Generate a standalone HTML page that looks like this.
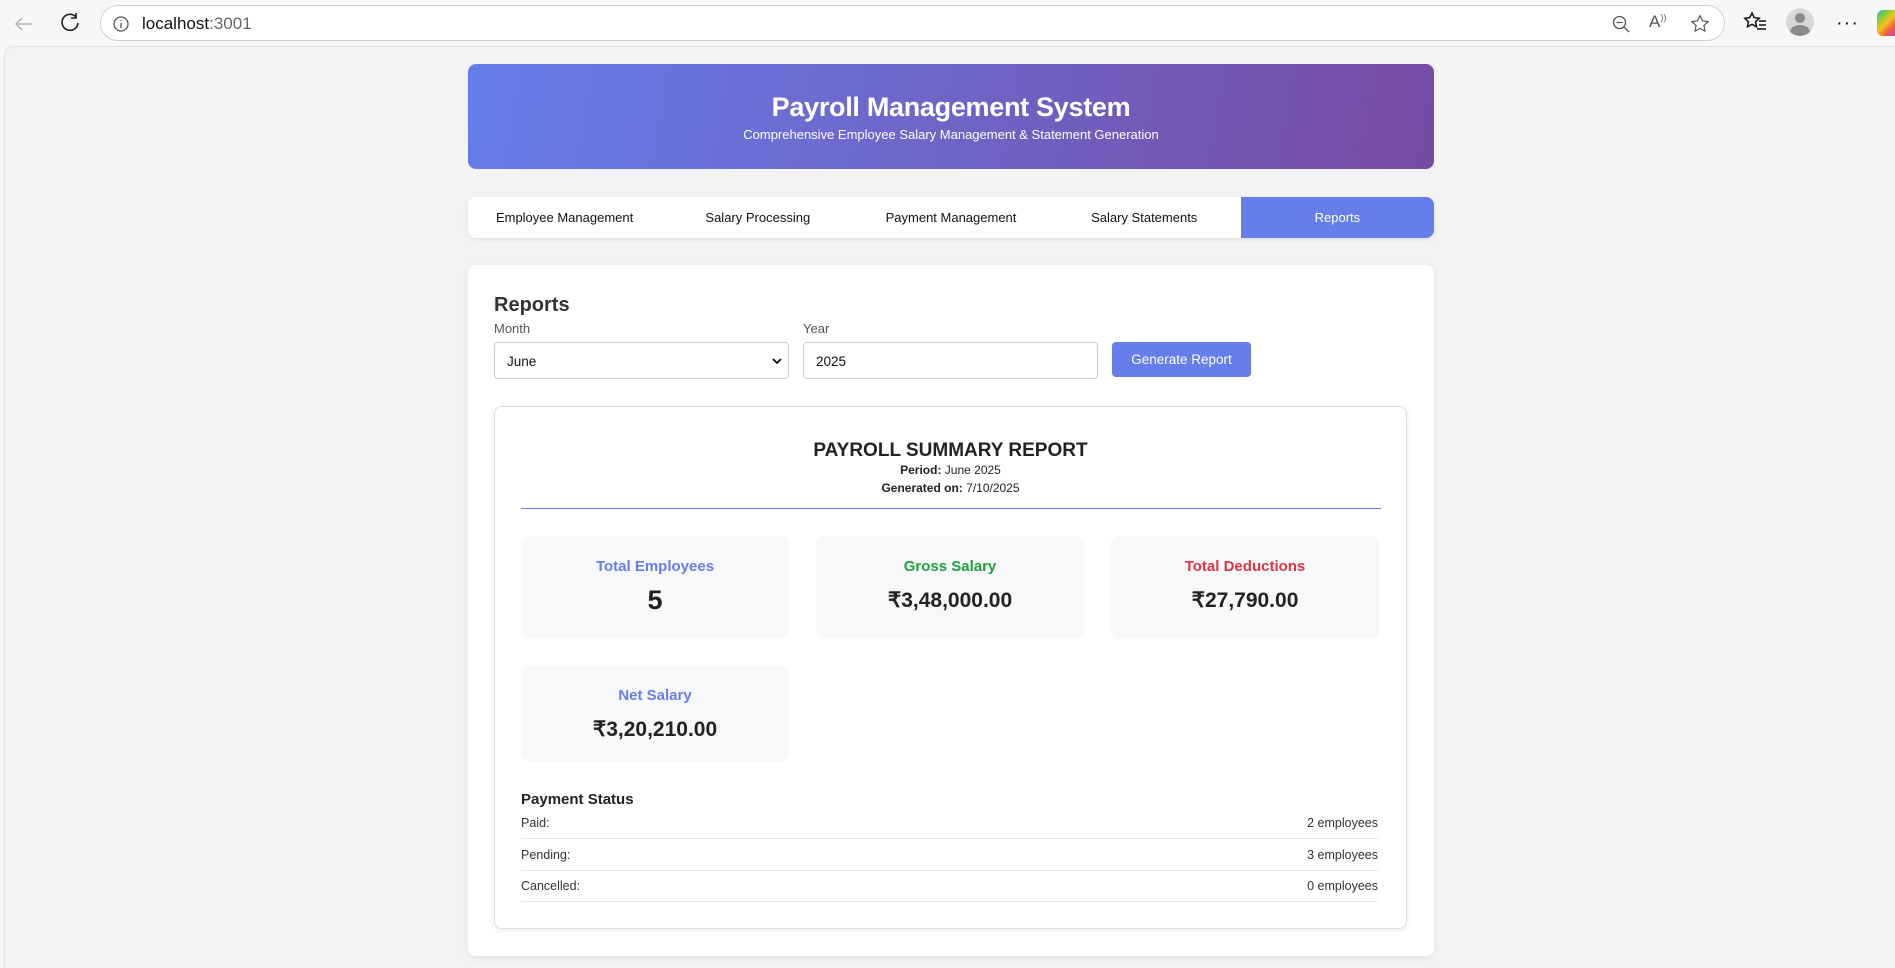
<!DOCTYPE html>
<html><head><meta charset="utf-8"><style>
*{box-sizing:border-box;margin:0;padding:0}
html{width:1895px;height:968px;overflow:hidden}
body{width:1895px;height:968px;overflow:hidden;background:#f7f7f7;font-family:"Liberation Sans",sans-serif;position:relative}
.top{position:absolute;left:0;top:0;width:1895px;height:47px;background:#f7f7f7}
.addr{position:absolute;left:100px;top:5px;width:1625px;height:36px;border:1px solid #d0d0d0;border-radius:18px;background:#fff}
.addr .txt{position:absolute;left:41px;top:8px;font-size:17px;color:#111}
.addr .txt span{color:#666}
.page{position:absolute;left:4px;top:46px;width:1891px;height:922px;background:#f3f3f3;border:1px solid #e2e2e2;border-bottom:none;border-right:none;border-radius:9px 0 0 0}
.c{position:absolute;left:468px;width:966px}
.hdr{top:64px;height:105px;border-radius:8px;background:linear-gradient(100deg,#667eea,#764ba2);color:#fff;text-align:center}
.hdr h1{font-size:27px;margin-top:28px;letter-spacing:-0.3px}
.hdr p{font-size:13px;margin-top:4px}
.nav{top:197px;height:41px;background:#fff;border-radius:8px;box-shadow:0 2px 6px rgba(0,0,0,.08);display:flex;overflow:hidden}
.nav div{flex:1;text-align:center;line-height:41px;font-size:13px;color:#111}
.nav .a{background:#667eea;color:#fff}
.card{top:265px;height:691px;background:#fff;border-radius:8px;box-shadow:0 2px 8px rgba(0,0,0,.07)}
.abs{position:absolute}
h2{position:absolute;left:26px;top:29px;font-size:20px;color:#333}
.lbl{position:absolute;top:56px;font-size:13px;color:#555}
.inp{position:absolute;top:77px;height:37px;border:1px solid #ccc;border-radius:4px;font-size:13.5px;padding:11px 12px;color:#111}
.btn{position:absolute;left:644px;top:77px;width:139px;height:35px;background:#667eea;color:#fff;border-radius:4px;font-size:13.5px;text-align:center;line-height:35px}
.rep{position:absolute;left:26px;top:141px;width:913px;height:523px;border:1px solid #ddd;border-radius:8px;box-shadow:0 2px 6px rgba(0,0,0,.08)}
.rt{position:absolute;left:0;width:100%;text-align:center;color:#222}
.stat{position:absolute;width:268px;height:103px;background:#f7f8fa;border-radius:8px;text-align:center}
.stat .l{font-size:15px;font-weight:bold;margin-top:22px}
.stat .v{font-size:21px;font-weight:bold;color:#222;margin-top:13px}
.row{position:absolute;left:26px;width:857px;height:31px;border-bottom:1px solid #e8e8e8;font-size:12.5px;color:#333;display:flex;justify-content:space-between;align-items:center}
</style></head><body>
<div class="top">
<svg class="abs" style="left:12px;top:12px" width="24" height="24" viewBox="0 0 24 24"><path d="M20 12H4M10 6l-6 6 6 6" fill="none" stroke="#b5b5b5" stroke-width="1.5"/></svg>
<svg class="abs" style="left:58px;top:10px" width="24" height="24" viewBox="0 0 24 24"><path d="M18 7A8 8 0 1 0 20 13M18 3v5h-5" fill="none" stroke="#222" stroke-width="1.6"/></svg>
<div class="addr"><svg class="abs" style="left:10px;top:8px" width="20" height="20" viewBox="0 0 20 20"><circle cx="10" cy="10" r="7" fill="none" stroke="#555" stroke-width="1.3"/><path d="M10 9v5M10 6v1" stroke="#555" stroke-width="1.4"/></svg><div class="txt">localhost<span>:3001</span></div>
<svg class="abs" style="left:1510px;top:8px" width="20" height="20" viewBox="0 0 20 20"><circle cx="8.5" cy="8.5" r="6" fill="none" stroke="#555" stroke-width="1.3"/><path d="M5.5 8.5h6M13 13l5 5" stroke="#555" stroke-width="1.3"/></svg>
<div class="abs" style="left:1548px;top:6px;font-size:17px;color:#555">A<sup style="font-size:9px">))</sup></div>
<svg class="abs" style="left:1588px;top:7px" width="22" height="22" viewBox="0 0 24 24"><path d="M12 3l2.7 5.6 6.1.8-4.5 4.2 1.1 6.1L12 16.8 6.6 19.7l1.1-6.1-4.5-4.2 6.1-.8z" fill="none" stroke="#555" stroke-width="1.3"/></svg>
</div>
<svg class="abs" style="left:1742px;top:10px" width="26" height="24" viewBox="0 0 26 24"><path d="M10 3l2.2 4.6 5 .7-3.6 3.4.9 5-4.5-2.4-4.5 2.4.9-5L2.8 8.3l5-.7z" fill="none" stroke="#111" stroke-width="1.5"/><path d="M17 11h7M17 15h7M15 19h9" stroke="#111" stroke-width="1.5"/></svg>
<div class="abs" style="left:1786px;top:8px;width:28px;height:28px;border-radius:50%;background:#d8d8d8;overflow:hidden"><div class="abs" style="left:9px;top:5px;width:10px;height:10px;border-radius:50%;background:#8a8a8a"></div><div class="abs" style="left:4px;top:17px;width:20px;height:14px;border-radius:50%;background:#8a8a8a"></div></div>
<div class="abs" style="left:1836px;top:12px;font-size:20px;color:#222;letter-spacing:1px">···</div>
<div class="abs" style="left:1877px;top:10px;width:18px;height:26px;border-radius:6px 0 0 6px;background:linear-gradient(135deg,#3fa9f5,#7ad03a,#f7c21b,#f25c3c,#c33fd6)"></div>
<div class="page"></div>
<div class="c hdr"><h1>Payroll Management System</h1><p>Comprehensive Employee Salary Management &amp; Statement Generation</p></div>
<div class="c nav"><div>Employee Management</div><div>Salary Processing</div><div>Payment Management</div><div>Salary Statements</div><div class="a">Reports</div></div>
<div class="c card">
<h2>Reports</h2>
<div class="lbl" style="left:26px">Month</div>
<div class="lbl" style="left:335px">Year</div>
<div class="inp" style="left:26px;width:295px">June<svg class="abs" style="right:6px;top:14px" width="10" height="8" viewBox="0 0 10 8"><path d="M1 2l4 4 4-4" fill="none" stroke="#111" stroke-width="1.8"/></svg></div>
<div class="inp" style="left:335px;width:295px">2025</div>
<div class="btn">Generate Report</div>
<div class="rep">
<div class="rt" style="top:33px;font-size:19px;font-weight:bold">PAYROLL SUMMARY REPORT</div>
<div class="rt" style="top:56px;font-size:12px"><b>Period:</b> June 2025</div>
<div class="rt" style="top:74px;font-size:12px"><b>Generated on:</b> 7/10/2025</div>
<div class="abs" style="left:26px;top:101px;width:860px;height:1px;background:#667eea"></div>
<div class="stat" style="left:26px;top:129px"><div class="l" style="color:#667eea">Total Employees</div><div class="v" style="font-size:27px;margin-top:10px">5</div></div>
<div class="stat" style="left:321px;top:129px"><div class="l" style="color:#22a03c">Gross Salary</div><div class="v">₹3,48,000.00</div></div>
<div class="stat" style="left:616px;top:129px"><div class="l" style="color:#dc3545">Total Deductions</div><div class="v">₹27,790.00</div></div>
<div class="stat" style="left:26px;top:258px;height:96px"><div class="l" style="color:#667eea">Net Salary</div><div class="v">₹3,20,210.00</div></div>
<div class="abs" style="left:26px;top:384px;font-size:15px;font-weight:bold;color:#222">Payment Status</div>
<div class="row" style="top:401px"><span>Paid:</span><span>2 employees</span></div>
<div class="row" style="top:433px"><span>Pending:</span><span>3 employees</span></div>
<div class="row" style="top:464px"><span>Cancelled:</span><span>0 employees</span></div>
</div>
</div>
</body></html>
